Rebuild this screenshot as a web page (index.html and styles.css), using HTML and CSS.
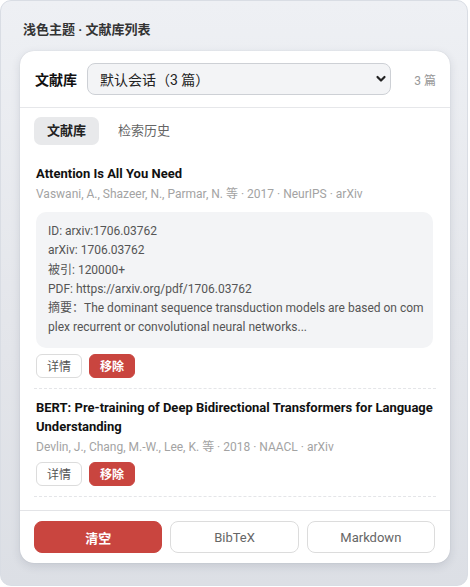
FILE: index.html
```html
<!DOCTYPE html>
<html lang="zh-CN">
<head>
<meta charset="utf-8">
<title>文献库列表</title>
<link rel="stylesheet" href="styles.css">
</head>
<body>
<div class="frame">
  <div class="page-title">浅色主题 · 文献库列表</div>
  <div class="card">
    <div class="card-head">
      <span class="head-label">文献库</span>
      <div class="select">
        <span>默认会话（3 篇）</span>
        <svg class="chev" width="12" height="8" viewBox="0 0 12 8"><path d="M2.5 2 L6 5.5 L9.5 2" fill="none" stroke="#222" stroke-width="2.2" stroke-linecap="round" stroke-linejoin="round"/></svg>
      </div>
      <span class="count">3 篇</span>
    </div>
    <div class="tabs">
      <span class="tab active">文献库</span>
      <span class="tab">检索历史</span>
    </div>
    <div class="list">
      <div class="item">
        <div class="item-title">Attention Is All You Need</div>
        <div class="item-meta">Vaswani, A., Shazeer, N., Parmar, N. 等 · 2017 · NeurIPS · arXiv</div>
        <div class="detail">
          <div>ID: arxiv:1706.03762</div>
          <div>arXiv: 1706.03762</div>
          <div>被引: 120000+</div>
          <div>PDF: https://arxiv.org/pdf/1706.03762</div>
          <div>摘要：The dominant sequence transduction models are based on complex recurrent or convolutional neural networks...</div>
        </div>
        <div class="actions">
          <button class="btn">详情</button>
          <button class="btn danger">移除</button>
        </div>
      </div>
      <div class="item">
        <div class="item-title">BERT: Pre-training of Deep Bidirectional Transformers for Language Understanding</div>
        <div class="item-meta">Devlin, J., Chang, M.-W., Lee, K. 等 · 2018 · NAACL · arXiv</div>
        <div class="actions">
          <button class="btn">详情</button>
          <button class="btn danger">移除</button>
        </div>
      </div>
    </div>
    <div class="card-foot">
      <button class="fbtn danger">清空</button>
      <button class="fbtn">BibTeX</button>
      <button class="fbtn">Markdown</button>
    </div>
  </div>
</div>
</body>
</html>
```

FILE: styles.css
```css
* { box-sizing: border-box; }
html, body {
  margin: 0;
  padding: 0;
  background: #ffffff;
  font-family: Roboto, "Noto Sans CJK SC", sans-serif;
  color: #222;
}
.frame {
  width: 468px;
  height: 586px;
  border: 1px solid #d9dde4;
  border-radius: 11px;
  background: linear-gradient(180deg, #eef0f4 0%, #e3e5ea 60%, #dcdfe5 100%);
  padding: 19px 19px 0 19px;
}
.page-title {
  font-size: 13px;
  font-weight: 700;
  color: #333;
  line-height: 20px;
  padding-left: 3px;
  margin-bottom: 11px;
}
.card {
  width: 430px;
  height: 512px;
  background: #fff;
  border-radius: 14px;
  box-shadow: 0 3px 10px rgba(40, 50, 70, 0.13), 0 0 1px rgba(40, 50, 70, 0.2);
  display: flex;
  flex-direction: column;
  overflow: hidden;
}
.card-head {
  display: flex;
  align-items: center;
  padding: 12px 14px 12px 15px;
  border-bottom: 1px solid #e6e7ea;
}
.head-label {
  font-size: 14px;
  font-weight: 700;
  color: #111;
  margin-right: 10px;
}
.select {
  flex: 1;
  height: 32px;
  border: 1px solid #cdd0d5;
  border-radius: 8px;
  background: #f3f4f6;
  display: flex;
  align-items: center;
  justify-content: space-between;
  padding: 0 3px 0 12px;
  font-size: 14px;
  color: #222;
}
.chev { display: block; }
.count {
  margin-left: 23px;
  font-size: 12px;
  color: #999;
}
.tabs {
  display: flex;
  gap: 6px;
  padding: 9px 14px 0 14px;
}
.tab {
  font-size: 13px;
  line-height: 28px;
  padding: 0 13px;
  border-radius: 7px;
  color: #666;
}
.tab.active {
  background: #e8e9eb;
  color: #222;
  font-weight: 700;
}
.list {
  flex: 1;
  overflow: hidden;
  padding: 10px 14px 0 14px;
}
.item {
  padding: 9px 2px 10px 2px;
  border-bottom: 1px dashed #e4e5e8;
}
.item-title {
  font-size: 13px;
  font-weight: 700;
  line-height: 19px;
  color: #111;
}
.item-meta {
  font-size: 12px;
  line-height: 19px;
  color: #a3a3a3;
  margin-top: 2px;
}
.detail {
  margin-top: 8px;
  margin-right: 1px;
  background: #f3f4f6;
  border-radius: 10px;
  padding: 10px 8px 10px 12px;
  font-size: 12px;
  line-height: 19.3px;
  color: #555;
  word-break: break-all;
}
.actions {
  display: flex;
  gap: 7px;
  margin-top: 6px;
}
.item-meta + .actions { margin-top: 5px; }
.btn {
  font-family: inherit;
  font-size: 12px;
  height: 24px;
  padding: 0 10px;
  border: 1px solid #dcdcdc;
  border-radius: 6px;
  background: #fff;
  color: #555;
}
.btn.danger {
  background: #c9453f;
  border-color: #c9453f;
  color: #fff;
  font-weight: 700;
}
.card-foot {
  border-top: 1px solid #e3e4e7;
  padding: 10px 15px 10px 14px;
  display: grid;
  grid-template-columns: 1fr 1fr 1fr;
  gap: 8px;
}
.fbtn {
  font-family: inherit;
  font-size: 13px;
  height: 32px;
  border: 1px solid #dcdcdc;
  border-radius: 8px;
  background: #fff;
  color: #666;
}
.fbtn.danger {
  background: #c9453f;
  border-color: #c9453f;
  color: #fff;
  font-weight: 700;
}
```
